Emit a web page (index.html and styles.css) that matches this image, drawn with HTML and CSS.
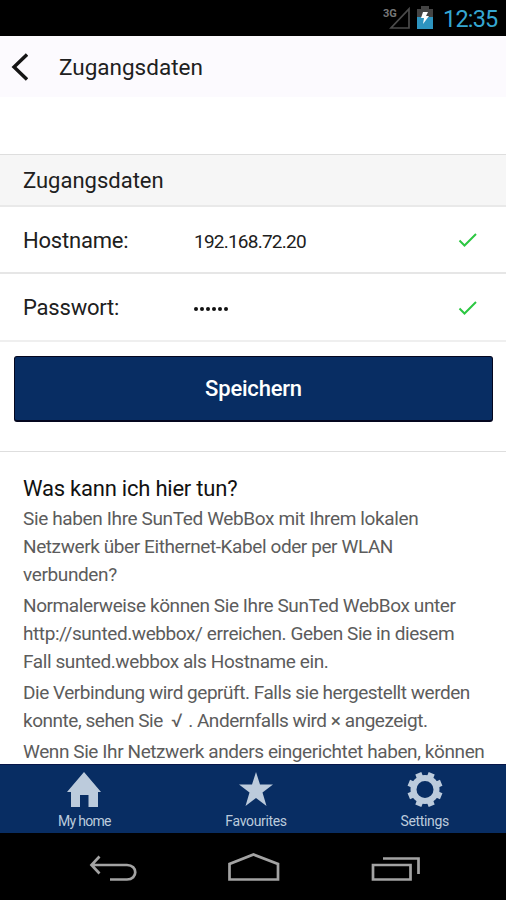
FILE: index.html
```html
<!DOCTYPE html>
<html lang="de">
<head>
<meta charset="utf-8">
<title>Zugangsdaten</title>
<link rel="stylesheet" href="styles.css">
</head>
<body>
<div class="status">
  <svg class="signal" width="29" height="30" viewBox="0 0 29 30"><path d="M26 9v19H8z" fill="none" stroke="#4b4b4b" stroke-width="1.7"/><text x="0" y="17" class="net">3G</text></svg>
  <svg class="battery" width="16" height="24" viewBox="0 0 16 24"><path d="M0 3h4V0h8v3h4v9H0z" fill="#444"/><path d="M0 11h16v12H0z" fill="#2d94bf"/><path d="M6 6h5L9 10h3L6 18l1-6H4z" fill="#fff"/></svg>
  <span class="clock">12:35</span>
</div>
<header class="bar">
  <svg class="chevron" width="18" height="28" viewBox="0 0 18 28"><path d="M17 1.500L4 14l13 12.500" fill="none" stroke="#151515" stroke-width="3.4"/></svg>
  <h1 class="title">Zugangsdaten</h1>
</header>
<main class="content">
  <h2 class="section">Zugangsdaten</h2>
  <div class="row"><span class="label">Hostname:</span><span class="value">192.168.72.20</span>
    <svg class="check" width="20" height="16" viewBox="0 0 20 16"><path d="M1.500 8.500l5 5L18 2" fill="none" stroke="#2cc742" stroke-width="2"/></svg></div>
  <div class="row last"><span class="label">Passwort:</span><span class="value dots"><i></i><i></i><i></i><i></i><i></i><i></i></span>
    <svg class="check" width="20" height="16" viewBox="0 0 20 16"><path d="M1.500 8.500l5 5L18 2" fill="none" stroke="#2cc742" stroke-width="2"/></svg></div>
  <div class="action"><button class="save">Speichern</button></div>
  <section class="help">
    <h3 class="question">Was kann ich hier tun?</h3>
    <p><span class="loose">Sie haben Ihre SunTed WebBox mit Ihrem lokalen</span><br>Netzwerk über Eithernet-Kabel oder per WLAN<br><span class="loose">verbunden?</span></p>
    <p>Normalerweise können Sie Ihre SunTed WebBox unter<br>http://sunted.webbox/ erreichen. Geben Sie in diesem<br>Fall sunted.webbox als Hostname ein.</p>
    <p><span class="tight">Die Verbindung wird geprüft. Falls sie hergestellt werden</span><br><span class="tight">konnte, sehen Sie <span class="tick">√</span> . Andernfalls wird × angezeigt.</span></p>
    <p>Wenn Sie Ihr Netzwerk anders eingerichtet haben, können</p>
  </section>
</main>
<nav class="tabs">
  <div class="tab home"><svg width="36" height="36" viewBox="0 0 36 36"><path d="M18 0L35 20H32V35H22.500V23H14V35H5V20H1z"/></svg><span>My home</span></div>
  <div class="tab"><svg width="36" height="36" viewBox="0 0 36 36"><path d="M18 0L22 12.500H35L24.500 20.500L28.500 34L18 26L7.500 34L11.500 20.500L1 12.500H14z"/></svg><span>Favourites</span></div>
  <div class="tab"><svg width="36" height="36" viewBox="-18 -17.500 36 36"><g fill="none" stroke="#bccbdc"><circle r="11.500" stroke-width="6"/><path stroke-width="6.500" d="M4.600 11.100L6.700 16.200M11.100 4.600L16.200 6.700M11.100 -4.600L16.200 -6.700M4.600 -11.100L6.700 -16.200M-4.600 -11.100L-6.700 -16.200M-11.100 -4.600L-16.200 -6.700M-11.100 4.600L-16.200 6.700M-4.600 11.100L-6.700 16.200"/></g></svg><span>Settings</span></div>
</nav>
<footer class="system">
  <svg width="506" height="67" viewBox="0 0 506 67" fill="none" stroke="#a3a3a3" stroke-width="2.7"><path d="M99.500 23.500L91.500 32L99.500 40.500M92 32H127C138 32 138 46.500 127 46.500H110"/><path d="M229.500 46.500V31L253.500 21.500L278 31V46.500z"/><path d="M373 32H410.500V46.500H373zM383 25.500H418.500V41"/></svg>
</footer>
</body>
</html>
```
FILE: styles.css
```css
* { box-sizing: border-box; }
body { margin: 0; width: 506px; height: 900px; overflow: hidden; display: flex; flex-direction: column; background: #fff; font-family: Roboto, "Liberation Sans", sans-serif; color: #202020; }
h1, h2, h3, p { margin: 0; font-weight: 400; }
svg { display: block; flex: none; }
.status { height: 36px; flex: none; background: #000; display: flex; justify-content: flex-end; align-items: flex-start; padding-right: 8px; }
.signal { margin-right: 5px; }
.net { font: 700 11px Roboto, sans-serif; fill: #777; }
.battery { margin: 6px 10px 0 0; }
.clock { font-size: 23.5px; line-height: 38px; color: #35a7d2; letter-spacing: -.8px; width: 55px; white-space: nowrap; }
.bar { height: 61px; flex: none; background: #fcfafe; display: flex; align-items: center; padding-left: 10px; }
.chevron { margin-right: 31px; }
.title { font-size: 22.5px; line-height: 30px; padding-top: 1px; }
.content { flex: 1; min-height: 0; overflow: hidden; padding-top: 57px; }
.section { height: 53px; border-top: 1px solid #dedede; border-bottom: 2px solid #e9e9e9; background: #f6f6f6; padding-left: 23px; line-height: 51px; font-size: 22px; }
.row { height: 67px; border-bottom: 2px solid #e6e6e6; display: flex; align-items: center; padding: 1px 28px 0 23px; }
.row.last { height: 68px; border-color: #efefef; }
.label { width: 171px; font-size: 22px; letter-spacing: -.2px; }
.value { font-size: 19px; letter-spacing: -.77px; padding-top: 2px; }
.dots { display: flex; gap: 2px; }
.dots i { width: 4px; height: 4px; border-radius: 2px; background: #111; }
.check { margin-left: auto; }
.action { height: 110px; padding: 14px 13px 0 14px; border-bottom: 1px solid #dedede; }
.save { display: block; width: 100%; height: 66px; border: 1px solid #04071f; border-bottom-width: 2px; border-radius: 3px; background: #082d63; color: #fff; font: 500 22px Roboto, sans-serif; letter-spacing: -.2px; padding: 0; }
.help { padding: 22px 0 0 23px; white-space: nowrap; color: #5c5c5c; font-size: 19px; line-height: 28px; }
.question { font-size: 22px; line-height: 30px; color: #111; letter-spacing: -.22px; margin-bottom: 1px; }
.help p { margin-bottom: 3px; letter-spacing: -.41px; }
.loose { letter-spacing: -.37px; }
.tight { letter-spacing: -.47px; }
.tick { margin: 0 2px 0 4px; }
.tabs { height: 69px; flex: none; background: #082d63; border-top: 1px solid #071649; display: flex; padding: 7px 0 0; }
.tab { flex: 1; display: flex; flex-direction: column; align-items: center; fill: #bccbdc; color: #bccbdc; font-size: 14px; letter-spacing: -.35px; line-height: 20px; gap: 3px; position: relative; left: 3px; }
.tab.home { letter-spacing: -.7px; left: 0; }
.system { height: 67px; flex: none; background: #000; }
```
